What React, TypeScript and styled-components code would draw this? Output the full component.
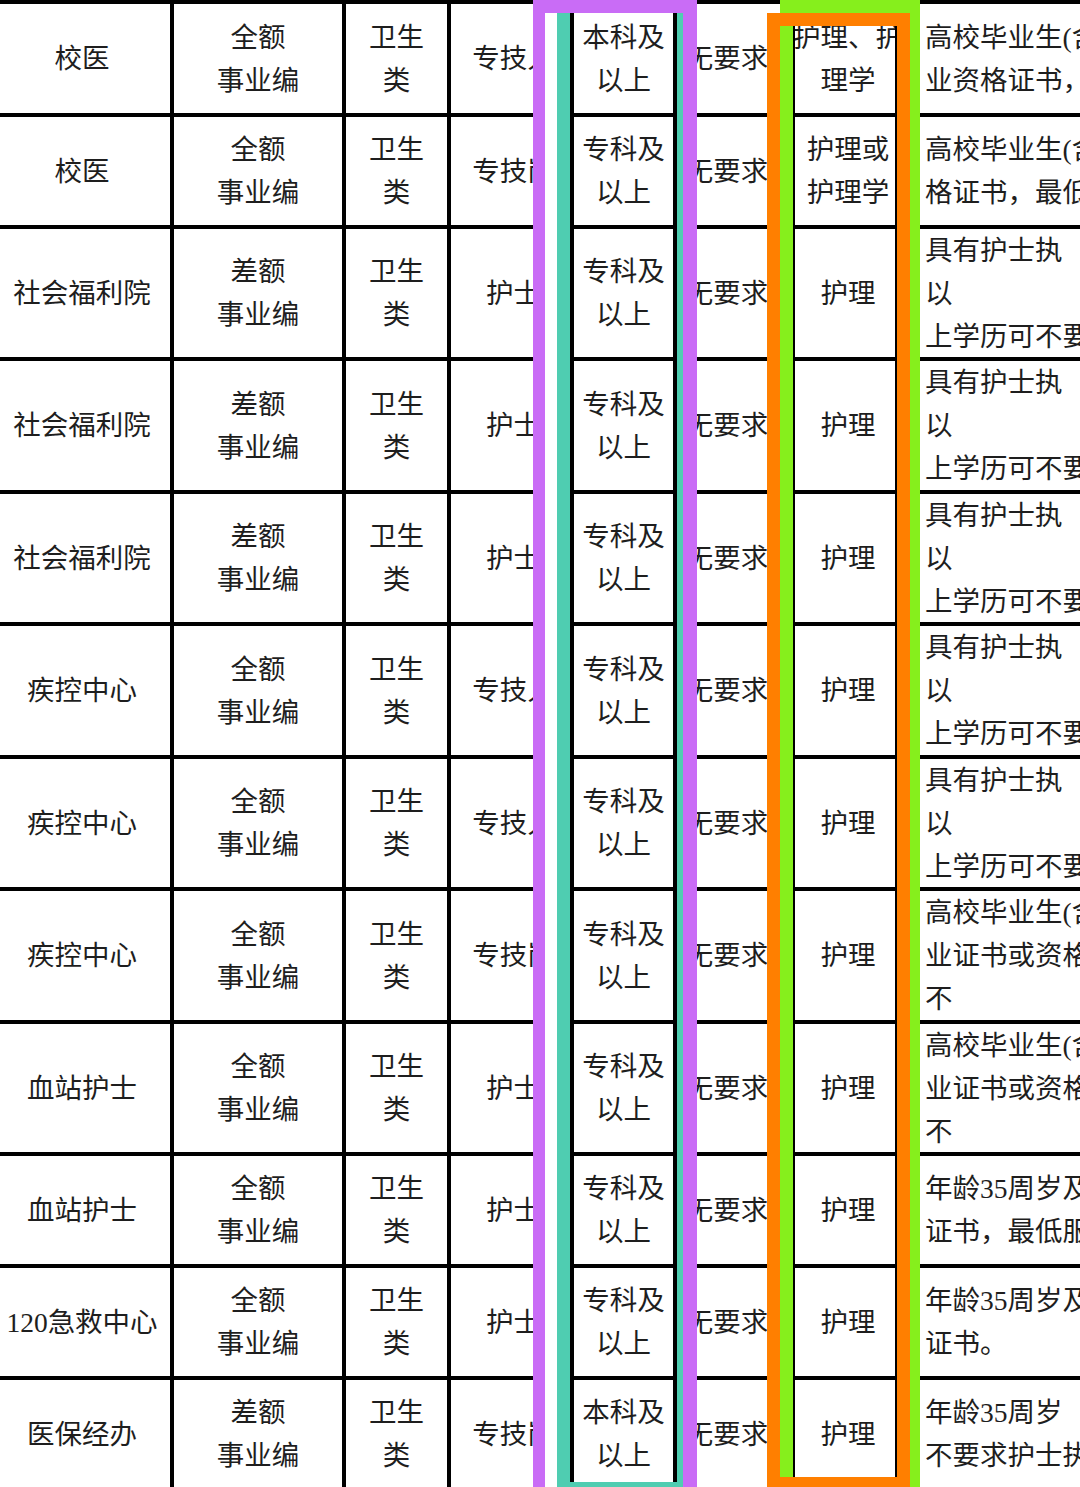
import React from 'react';
import styled, { createGlobalStyle } from 'styled-components';

const Global = createGlobalStyle`
  html, body { margin: 0; padding: 0; background: #fff; overflow: hidden; }
  body { width: 1080px; height: 1487px; }
  #root { width: 1080px; height: 1487px; overflow: hidden; }
`;

const Page = styled.div`
  position: relative;
  width: 1080px;
  height: 1487px;
  overflow: hidden;
  background: #fff;
  font-family: "Liberation Serif", "Noto Sans CJK SC", serif;
  font-size: 27.5px;
  color: #1e1e1e;
`;

const Table = styled.div`
  display: flex;
  flex-direction: column;
  width: 1320px;
  border-top: 4px solid #000;
`;

const Row = styled.div<{ $h: number }>`
  display: grid;
  grid-template-columns: 174px 172px 105px 123px 103px 118px 104px 1fr;
  height: ${(p) => p.$h}px;
  box-sizing: border-box;
  border-bottom: 4px solid #000;
`;

const Cell = styled.div<{ $padL?: number; $padR?: number }>`
  display: flex;
  flex-direction: column;
  justify-content: center;
  align-items: center;
  box-sizing: border-box;
  border-right: 4px solid #000;
  overflow: hidden;
  white-space: nowrap;
  line-height: 43px;
  padding-left: ${(p) => p.$padL ?? 0}px;
  padding-right: ${(p) => p.$padR ?? 0}px;
`;

const NoteCell = styled.div`
  display: flex;
  flex-direction: column;
  justify-content: center;
  align-items: flex-start;
  box-sizing: border-box;
  padding-left: 26px;
  overflow: hidden;
  white-space: nowrap;
  line-height: 43px;
`;

const Line = styled.span`
  display: block;
`;

const PurpleFrame = styled.div`
  position: absolute;
  left: 533px;
  top: 0;
  width: 164px;
  height: 1540px;
  box-sizing: border-box;
  border-style: solid;
  border-color: #c96cf6;
  border-width: 13px 14px 0 12px;
  pointer-events: none;
`;

const TealFrame = styled.div`
  position: absolute;
  left: 557px;
  top: 13px;
  width: 126px;
  height: 1474px;
  box-sizing: border-box;
  border-style: solid;
  border-color: #4fcdb1;
  border-width: 0 6px 5px 13px;
  box-shadow: -12px 0 0 0 #fff;
  pointer-events: none;
`;

const GreenFrame = styled.div`
  position: absolute;
  left: 780px;
  top: 0;
  width: 140px;
  height: 1540px;
  box-sizing: border-box;
  border-style: solid;
  border-color: #86ef1c;
  border-width: 13px 10px 0 13px;
  pointer-events: none;
`;

const OrangeFrame = styled.div`
  position: absolute;
  left: 767px;
  top: 13px;
  width: 143px;
  height: 1474px;
  box-sizing: border-box;
  border-style: solid;
  border-color: #ff7f00;
  border-width: 13px 13px 10px 13px;
  pointer-events: none;
`;

type RowData = {
  h: number;
  unit: string;
  fund: string;
  kind: string[];
  post: string;
  edu: string[];
  other: string;
  major: string[];
  note: string[];
};

const qianE = '全额';
const chaE = '差额';
const nurseNote = ['具有护士执', '以', '上学历可不要求'];
const gradNote = ['高校毕业生(含择业期', '业证书或资格证书', '不'];

const rows: RowData[] = [
  { h: 113, unit: '校医', fund: qianE, kind: ['卫生', '类'], post: '专技人', edu: ['本科及', '以上'], other: '无要求', major: ['护理、护', '理学'], note: ['高校毕业生(含择业期', '业资格证书，最低'] },
  { h: 112, unit: '校医', fund: qianE, kind: ['卫生', '类'], post: '专技岗', edu: ['专科及', '以上'], other: '无要求', major: ['护理或', '护理学'], note: ['高校毕业生(含择业期', '格证书，最低服务'] },
  { h: 132, unit: '社会福利院', fund: chaE, kind: ['卫生', '类'], post: '护士', edu: ['专科及', '以上'], other: '无要求', major: ['护理'], note: nurseNote },
  { h: 133, unit: '社会福利院', fund: chaE, kind: ['卫生', '类'], post: '护士', edu: ['专科及', '以上'], other: '无要求', major: ['护理'], note: nurseNote },
  { h: 132, unit: '社会福利院', fund: chaE, kind: ['卫生', '类'], post: '护士', edu: ['专科及', '以上'], other: '无要求', major: ['护理'], note: nurseNote },
  { h: 133, unit: '疾控中心', fund: qianE, kind: ['卫生', '类'], post: '专技人', edu: ['专科及', '以上'], other: '无要求', major: ['护理'], note: nurseNote },
  { h: 132, unit: '疾控中心', fund: qianE, kind: ['卫生', '类'], post: '专技人', edu: ['专科及', '以上'], other: '无要求', major: ['护理'], note: nurseNote },
  { h: 133, unit: '疾控中心', fund: qianE, kind: ['卫生', '类'], post: '专技岗', edu: ['专科及', '以上'], other: '无要求', major: ['护理'], note: gradNote },
  { h: 132, unit: '血站护士', fund: qianE, kind: ['卫生', '类'], post: '护士', edu: ['专科及', '以上'], other: '无要求', major: ['护理'], note: gradNote },
  { h: 112, unit: '血站护士', fund: qianE, kind: ['卫生', '类'], post: '护士', edu: ['专科及', '以上'], other: '无要求', major: ['护理'], note: ['年龄35周岁及以下', '证书，最低服务'] },
  { h: 112, unit: '120急救中心', fund: qianE, kind: ['卫生', '类'], post: '护士', edu: ['专科及', '以上'], other: '无要求', major: ['护理'], note: ['年龄35周岁及以下', '证书。'] },
  { h: 112, unit: '医保经办', fund: chaE, kind: ['卫生', '类'], post: '专技岗', edu: ['本科及', '以上'], other: '无要求', major: ['护理'], note: ['年龄35周岁', '不要求护士执业'] },
];

const Lines = ({ items }: { items: string[] }) => (
  <>
    {items.map((t, i) => (
      <Line key={i}>{t}</Line>
    ))}
  </>
);

export default function App() {
  return (
    <>
      <Global />
      <Page>
        <Table>
          {rows.map((r, i) => (
            <Row key={i} $h={r.h}>
              <Cell $padR={6}>{r.unit}</Cell>
              <Cell>
                <Lines items={[r.fund, '事业编']} />
              </Cell>
              <Cell>
                <Lines items={r.kind} />
              </Cell>
              <Cell $padL={6}>{r.post}</Cell>
              <Cell>
                <Lines items={r.edu} />
              </Cell>
              <Cell $padR={14}>{r.other}</Cell>
              <Cell $padL={6}>
                <Lines items={r.major} />
              </Cell>
              <NoteCell>
                <Lines items={r.note} />
              </NoteCell>
            </Row>
          ))}
        </Table>
        <PurpleFrame />
        <TealFrame />
        <GreenFrame />
        <OrangeFrame />
      </Page>
    </>
  );
}
